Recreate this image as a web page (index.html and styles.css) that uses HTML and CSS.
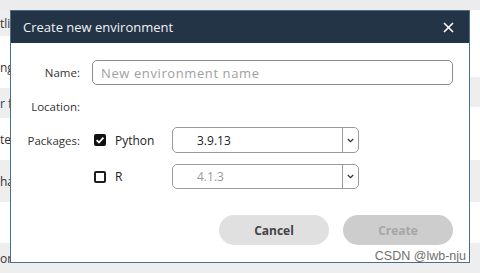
FILE: index.html
```html
<!DOCTYPE html>
<html>
  <head>
    <title>Create new environment</title>
    <link rel="stylesheet" href="styles.css">
  </head>
  <body>
    <!-- Page behind the modal -->
    <div class="page">
      <ul class="list list-left">
        <li class="row row-top"></li>
        <li class="row row-grey">tlie</li>
        <li class="row row-white row-low">ng</li>
        <li class="row row-grey row-link">r fo</li>
        <li class="row row-white">te</li>
        <li class="row row-grey">ha</li>
        <li class="row row-white"></li>
        <li class="row row-grey">on</li>
      </ul>
      <ul class="list list-right">
        <li class="row row-top"></li>
        <li class="row row-white"></li>
        <li class="row row-grey"></li>
        <li class="row row-white"></li>
        <li class="row row-grey"></li>
        <li class="row row-white"></li>
        <li class="row row-grey"></li>
      </ul>
    </div>

    <!-- Modal -->
    <div class="dialog">
      <div class="dialog-header">
        <span class="dialog-title">Create new environment</span>
        <svg class="close" width="11" height="11" viewBox="0 0 11 11">
          <path d="M1 1 L10 10 M10 1 L1 10" stroke="#ffffff" stroke-width="1.6" />
        </svg>
      </div>

      <div class="dialog-body">
        <div class="form">
          <label class="form-label" for="env-name">Name:</label>
          <input class="text-input" id="env-name" type="text" placeholder="New environment name" />

          <span class="form-label">Location:</span>
          <span></span>

          <span class="form-label">Packages:</span>
          <div class="pkg">
            <span class="pkg-check">
              <span class="checkbox checked">
                <svg width="12" height="12" viewBox="0 0 12 12">
                  <path d="M2.6 6.2 L5 8.5 L9.4 3.6" stroke="#ffffff" stroke-width="1.8" fill="none" />
                </svg>
              </span>
              Python
            </span>
            <div class="select">
              <span class="select-value">3.9.13</span>
              <span class="select-arrow">
                <svg width="7" height="5" viewBox="0 0 7 5">
                  <path d="M0.8 1 L3.5 3.6 L6.2 1" stroke="#333333" stroke-width="1.3" fill="none" />
                </svg>
              </span>
            </div>
          </div>

          <span></span>
          <div class="pkg">
            <span class="pkg-check">
              <span class="checkbox"></span>
              R
            </span>
            <div class="select">
              <span class="select-value muted">4.1.3</span>
              <span class="select-arrow">
                <svg width="7" height="5" viewBox="0 0 7 5">
                  <path d="M0.8 1 L3.5 3.6 L6.2 1" stroke="#333333" stroke-width="1.3" fill="none" />
                </svg>
              </span>
            </div>
          </div>
        </div>

        <div class="dialog-footer">
          <button class="btn btn-cancel">Cancel</button>
          <button class="btn btn-create" disabled>Create</button>
        </div>
      </div>
    </div>

    <div class="watermark">CSDN @lwb-nju</div>
  </body>
</html>
```

FILE: styles.css
```css
body {
  font-family: "Open Sans", "Noto Sans", sans-serif;
  margin: 0;
  padding: 0;
  width: 480px;
  height: 273px;
  overflow: hidden;
  color: #222;
}

/* background page */
.page {
  display: flex;
  height: 273px;
}
.list {
  list-style: none;
  margin: 0;
  padding: 0;
  display: flex;
  flex-direction: column;
}
.list-left {
  flex: 1;
}
.list-right {
  width: 11px;
}
.row {
  display: flex;
  align-items: center;
  font-size: 12px;
  color: #333;
  white-space: nowrap;
  overflow: hidden;
}
.row-top {
  height: 10px;
  background-color: #ececec;
}
.row-grey {
  background-color: #eeeeee;
}
.row-white {
  background-color: #ffffff;
}
.row-low {
  padding-top: 10px;
}
.row-link {
  color: #23405c;
}
.list-left .row:nth-child(2) { height: 26px; }
.list-left .row:nth-child(3) { height: 42px; }
.list-left .row:nth-child(4) { height: 30px; }
.list-left .row:nth-child(5) { height: 42px; }
.list-left .row:nth-child(6) { height: 42px; }
.list-left .row:nth-child(7) { height: 41px; }
.list-left .row:nth-child(8) { height: 30px; }

.list-right .row:nth-child(2) { height: 67px; }
.list-right .row:nth-child(3) { height: 30px; }
.list-right .row:nth-child(4) { height: 53px; }
.list-right .row:nth-child(5) { height: 42px; }
.list-right .row:nth-child(6) { height: 41px; }
.list-right .row:nth-child(7) { height: 30px; }

/* modal */
.dialog {
  position: absolute;
  top: 10px;
  left: 10px;
  width: 460px;
  height: 253px;
  box-sizing: border-box;
  background-color: #ffffff;
  border: 1px solid #4d6e87;
}
.dialog-header {
  height: 32px;
  background-color: #243447;
  display: flex;
  align-items: center;
  justify-content: space-between;
  padding: 0 15px 0 12px;
}
.dialog-title {
  color: #eef1f4;
  font-size: 13px;
}
.dialog-body {
  padding: 17px 16px 0 0;
}
.form {
  display: grid;
  grid-template-columns: 69px 1fr;
  grid-template-rows: 25px 20px 26px 25px;
  column-gap: 12px;
  row-gap: 11px;
  align-items: center;
}
.form-label {
  text-align: right;
  font-size: 11.5px;
  color: #333;
}
.text-input {
  height: 25px;
  box-sizing: border-box;
  border: 1px solid #8a8a8a;
  border-radius: 5px;
  padding: 0 8px;
  font-family: inherit;
  font-size: 13px;
  letter-spacing: 0.6px;
  outline: none;
}
.text-input::placeholder {
  color: #a0a0a0;
}
.pkg {
  display: flex;
  align-items: center;
  height: 100%;
}
.pkg-check {
  width: 80px;
  display: flex;
  align-items: center;
  gap: 9px;
  font-size: 12px;
  color: #222;
}
.checkbox {
  width: 12px;
  height: 12px;
  box-sizing: border-box;
  border: 2px solid #1e1e1e;
  border-radius: 2px;
  margin-left: 2px;
  display: flex;
}
.checkbox.checked {
  border: none;
  background-color: #111;
}
.select {
  width: 187px;
  height: 100%;
  box-sizing: border-box;
  border: 1px solid #9a9a9a;
  border-radius: 5px;
  display: flex;
  align-items: center;
}
.select-value {
  flex: 1;
  padding-left: 24px;
  font-size: 12px;
  color: #222;
}
.select-value.muted {
  color: #9a9a9a;
}
.select-arrow {
  width: 15px;
  height: 100%;
  border-left: 1px solid #9a9a9a;
  display: flex;
  align-items: center;
  justify-content: center;
}
.dialog-footer {
  margin-top: 26px;
  display: flex;
  justify-content: flex-end;
  gap: 14px;
}
.btn {
  width: 110px;
  height: 30px;
  border: none;
  border-radius: 15px;
  font-family: inherit;
  font-size: 12px;
  font-weight: bold;
}
.btn-cancel {
  background-color: #e0e0e0;
  color: #444;
}
.btn-create {
  background-color: #cdcdcd;
  color: #a6a6a6;
}

.watermark {
  position: absolute;
  right: 14px;
  bottom: 10px;
  font-family: "Liberation Sans", Arial, sans-serif;
  font-size: 12.5px;
  color: #6f6f6f;
}
```
